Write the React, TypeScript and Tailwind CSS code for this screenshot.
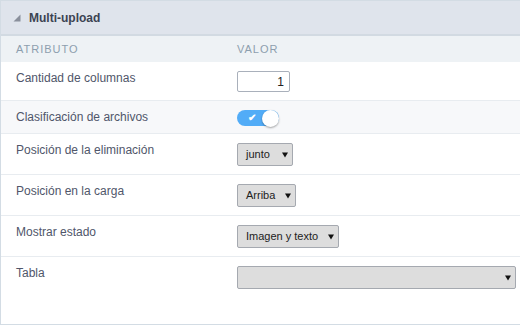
import React from "react";

type Row = {
  label: string;
  kind: "input" | "toggle" | "select";
  value?: string;
  h: string;
  bg?: string;
  selectW?: string;
};

const rows: Row[] = [
  { label: "Cantidad de columnas", kind: "input", value: "1", h: "h-[39px]" },
  { label: "Clasificación de archivos", kind: "toggle", h: "h-[33px]", bg: "bg-[#f7f8fa]" },
  { label: "Posición de la eliminación", kind: "select", value: "junto", h: "h-[41px]", selectW: "w-[56px]" },
  { label: "Posición en la carga", kind: "select", value: "Arriba", h: "h-[41px]", selectW: "w-[59px]" },
  { label: "Mostrar estado", kind: "select", value: "Imagen y texto", h: "h-[41px]", selectW: "w-[102px]" },
  { label: "Tabla", kind: "select", value: "", h: "h-[66px]", selectW: "w-[279px]" },
];

const Arrow = () => (
  <svg width="6" height="6" viewBox="0 0 6 6" className="shrink-0">
    <path d="M0 0.5 L6 0.5 L3 5.5 Z" fill="#111" />
  </svg>
);

const Value = ({ row }: { row: Row }) => {
  if (row.kind === "input") {
    return (
      <div className="mt-[9px] w-[53px] h-[21px] border border-[#a9b0bb] rounded-[2px] bg-white flex items-center justify-end pr-[5px] text-[12px] text-[#222]">
        {row.value}
      </div>
    );
  }
  if (row.kind === "toggle") {
    return (
      <div className="mt-[9px] w-[42px] h-[16px] rounded-full bg-[#52acf7] relative flex items-center">
        <span className="text-white text-[10px] leading-none ml-[11px] font-bold">✔</span>
        <span className="absolute right-0 top-[-0.5px] w-[17px] h-[17px] rounded-full bg-white shadow-[0_1px_2px_rgba(0,0,0,0.35)]" />
      </div>
    );
  }
  return (
    <div
      className={`mt-[9px] ${row.selectW} h-[23px] border border-[#a5a9b0] rounded-[2px] bg-[#dddddd] flex items-center justify-between pl-[8px] pr-[4px] text-[11px] text-[#222]`}
    >
      <span>{row.value}</span>
      <Arrow />
    </div>
  );
};

export default function App() {
  return (
    <div
      className="w-[520px] h-[325px] bg-white overflow-hidden"
      style={{ fontFamily: '"Liberation Sans", Arial, sans-serif' }}
    >
      <div className="border border-r-0 border-[#d3dce4] h-[325px] flex flex-col">
        <div className="h-[35px] shrink-0 bg-[#dfe4ec] border-b-2 border-[#d2dae2] flex items-center pl-[12px] gap-[8px]">
          <svg width="8" height="8" viewBox="0 0 8 8">
            <path d="M7.5 0.5 L7.5 7.5 L0.5 7.5 Z" fill="#8a909c" />
          </svg>
          <span className="text-[12px] font-bold text-[#3b4352]">Multi-upload</span>
        </div>
        <div className="h-[26px] shrink-0 bg-[#eef2f5] grid grid-cols-[236px_1fr] items-center text-[11px] tracking-[1px] text-[#8d9eae]">
          <span className="pl-[15px]">ATRIBUTO</span>
          <span>VALOR</span>
        </div>
        {rows.map((row, i) => (
          <div
            key={row.label}
            className={`grid shrink-0 grid-cols-[236px_1fr] ${row.h} ${row.bg ?? "bg-white"} ${i < rows.length - 1 ? "border-b border-[#e8ecf0]" : ""}`}
          >
            <span className="pl-[15px] pt-[7px] text-[12px] text-[#50566a]">{row.label}</span>
            <div>
              <Value row={row} />
            </div>
          </div>
        ))}
      </div>
    </div>
  );
}
